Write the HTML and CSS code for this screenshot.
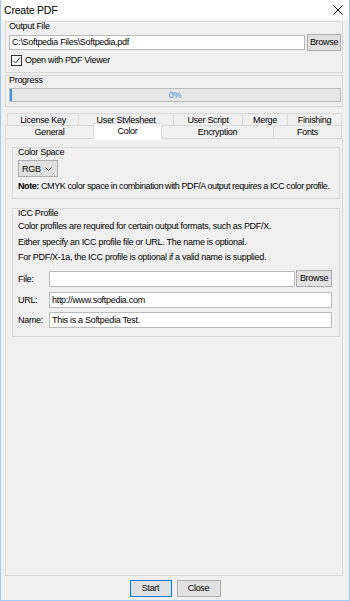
FILE: index.html
```html
<!DOCTYPE html>
<html lang="en">
<head>
    <meta charset="UTF-8">
    <title>Create PDF</title>
    <link rel="stylesheet" href="styles.css">
</head>
<body>
    <div class="window">
        <div class="titlebar">
            <span class="title">Create PDF</span>
            <svg class="close" width="10" height="10" viewBox="0 0 10 10">
                <path d="M0.5 0.5 L9.5 9.5 M9.5 0.5 L0.5 9.5" stroke="#000" stroke-width="1" fill="none"/>
            </svg>
        </div>

        <div class="main">
            <div class="group output">
                <div class="group-title">Output File</div>
                <div class="file-row">
                    <div class="field">C:\Softpedia Files\Softpedia.pdf</div>
                    <div class="btn">Browse</div>
                </div>
                <div class="check-row">
                    <span class="checkbox">
                        <svg width="9" height="9" viewBox="0 0 9 9">
                            <path d="M1 4.5 L3.5 7 L8 1.5" stroke="#222" stroke-width="1" fill="none"/>
                        </svg>
                    </span>
                    Open with PDF Viewer
                </div>
            </div>

            <div class="group progress">
                <div class="group-title">Progress</div>
                <div class="bar"><span class="bar-fill"></span>0%</div>
            </div>

            <div class="tabs">
                <div class="tab-row back">
                    <div class="tab w71">License Key</div>
                    <div class="tab w95">User Stylesheet</div>
                    <div class="tab w69">User Script</div>
                    <div class="tab w45">Merge</div>
                    <div class="tab w55 last">Finishing</div>
                </div>
                <div class="tab-row front">
                    <div class="tab w88">General</div>
                    <div class="tab w68 active">Color</div>
                    <div class="tab w112">Encryption</div>
                    <div class="tab w69 last">Fonts</div>
                </div>
            </div>

            <div class="pane">
                <div class="group colorspace">
                    <div class="group-title">Color Space</div>
                    <div class="combo">
                        <span>RGB</span>
                        <svg width="7" height="4" viewBox="0 0 7 4">
                            <path d="M0.5 0.5 L3.5 3.5 L6.5 0.5" stroke="#444" stroke-width="1" fill="none"/>
                        </svg>
                    </div>
                    <div class="note"><b>Note:</b> CMYK color space in combination with PDF/A output requires a ICC color profile.</div>
                </div>

                <div class="group icc">
                    <div class="group-title">ICC Profile</div>
                    <div class="info">
                        <div>Color profiles are required for certain output formats, such as PDF/X.</div>
                        <div>Either specify an ICC profile file or URL. The name is optional.</div>
                        <div>For PDF/X-1a, the ICC profile is optional if a valid name is supplied.</div>
                    </div>
                    <div class="form-row">
                        <span class="form-label">File:</span>
                        <div class="field"></div>
                        <div class="btn">Browse</div>
                    </div>
                    <div class="form-row">
                        <span class="form-label">URL:</span>
                        <div class="field">http://www.softpedia.com</div>
                    </div>
                    <div class="form-row">
                        <span class="form-label">Name:</span>
                        <div class="field">This is a Softpedia Test.</div>
                    </div>
                </div>
            </div>
        </div>

        <div class="footer">
            <div class="btn default">Start</div>
            <div class="btn close-btn">Close</div>
        </div>
    </div>
</body>
</html>
```

FILE: styles.css
```css
* {
    box-sizing: border-box;
}
body {
    margin: 0;
    font-family: "Liberation Sans", Arial, sans-serif;
    font-size: 9px;
    letter-spacing: -0.3px;
    color: #000;
}
.window {
    width: 350px;
    height: 601px;
    display: flex;
    flex-direction: column;
    border: 1px solid #9ccbf3;
    border-top: none;
    background: #f0f0f0;
}
.titlebar {
    height: 20px;
    flex: none;
    background: #fff;
    display: flex;
    align-items: center;
    justify-content: space-between;
    padding: 0 6px 0 3px;
}
.title {
    font-size: 10.5px;
    letter-spacing: -0.2px;
}
.main {
    flex: 1;
    display: flex;
    flex-direction: column;
    padding: 1px 6px 0 4px;
}
.group {
    border: 1px solid #d8d8d8;
}
.group-title {
    line-height: 10px;
    margin-top: -1px;
}
.output {
    height: 52px;
    padding: 0 1px 0 3px;
}
.file-row {
    display: flex;
    align-items: center;
    height: 15px;
    margin-top: 4px;
}
.field {
    flex: 1;
    height: 15px;
    background: #fff;
    border: 1px solid #bababa;
    padding-left: 2px;
    line-height: 13px;
    white-space: nowrap;
}
.btn {
    height: 17px;
    background: #e1e1e1;
    border: 1px solid #adadad;
    text-align: center;
    line-height: 15px;
}
.file-row .btn {
    width: 34px;
    margin-left: 2px;
}
.check-row {
    display: flex;
    align-items: center;
    height: 12px;
    margin-top: 4px;
    padding-left: 2px;
}
.checkbox {
    width: 11px;
    height: 11px;
    border: 1px solid #333;
    background: #fff;
    margin-right: 3px;
    display: flex;
    align-items: center;
    justify-content: center;
}
.progress {
    margin-top: 2px;
    padding: 0 1px 4px 3px;
}
.bar {
    position: relative;
    height: 14px;
    margin-top: 3px;
    border: 1px solid #bcbcbc;
    background: #e6e6e6;
    text-align: center;
    line-height: 12px;
    color: #3d8ee0;
}
.bar-fill {
    position: absolute;
    left: 0;
    top: 0;
    bottom: 0;
    width: 2px;
    background: #3b8fe0;
}
.tabs {
    margin-top: 6px;
}
.tab-row {
    display: flex;
    height: 13px;
}
.tab-row.back {
    margin-left: 2px;
}
.tab-row.front {
    margin-top: -1px;
}
.tab {
    height: 13px;
    border: 1px solid #d9d9d9;
    border-bottom: none;
    border-right: none;
    background: #f0f0f0;
    text-align: center;
    line-height: 12px;
    white-space: nowrap;
}
.tab.last {
    border-right: 1px solid #d9d9d9;
}
.tab.active {
    position: relative;
    z-index: 1;
    align-self: flex-start;
    height: 17px;
    margin-top: -2px;
    background: #fff;
    line-height: 14px;
}
.w45 { width: 45px; }
.w55 { width: 55px; }
.w68 { width: 68px; }
.w69 { width: 69px; }
.w71 { width: 71px; }
.w88 { width: 88px; }
.w95 { width: 95px; }
.w112 { width: 112px; }
.pane {
    flex: 1;
    border: 1px solid #d9d9d9;
    background: #f0f0f0;
    padding: 8px 2px 0 6px;
}
.colorspace {
    height: 52px;
    padding: 0 5px;
}
.combo {
    width: 40px;
    height: 17px;
    margin-top: 3px;
    background: #e1e1e1;
    border: 1px solid #adadad;
    display: flex;
    align-items: center;
    justify-content: space-between;
    padding: 0 5px 0 3px;
}
.note {
    margin-top: 4px;
    line-height: 11px;
    white-space: nowrap;
    letter-spacing: -0.42px;
}
.icc {
    margin-top: 9px;
    padding: 0 7px 8px 5px;
}
.info {
    margin-top: 1px;
    line-height: 15.5px;
}
.form-row {
    display: flex;
    align-items: center;
    height: 16px;
    margin-top: 5px;
}
.form-row:last-child {
    margin-top: 4px;
}
.form-label {
    width: 31px;
    flex: none;
}
.form-row .field {
    height: 16px;
    line-height: 14px;
}
.form-row .btn {
    width: 36px;
    margin-left: 1px;
}
.footer {
    flex: none;
    height: 24px;
    display: flex;
    justify-content: center;
    gap: 5px;
    padding-top: 4px;
}
.footer .btn {
    height: 17px;
}
.default {
    width: 42px;
    border-color: #0078d7;
}
.close-btn {
    width: 44px;
}
```
